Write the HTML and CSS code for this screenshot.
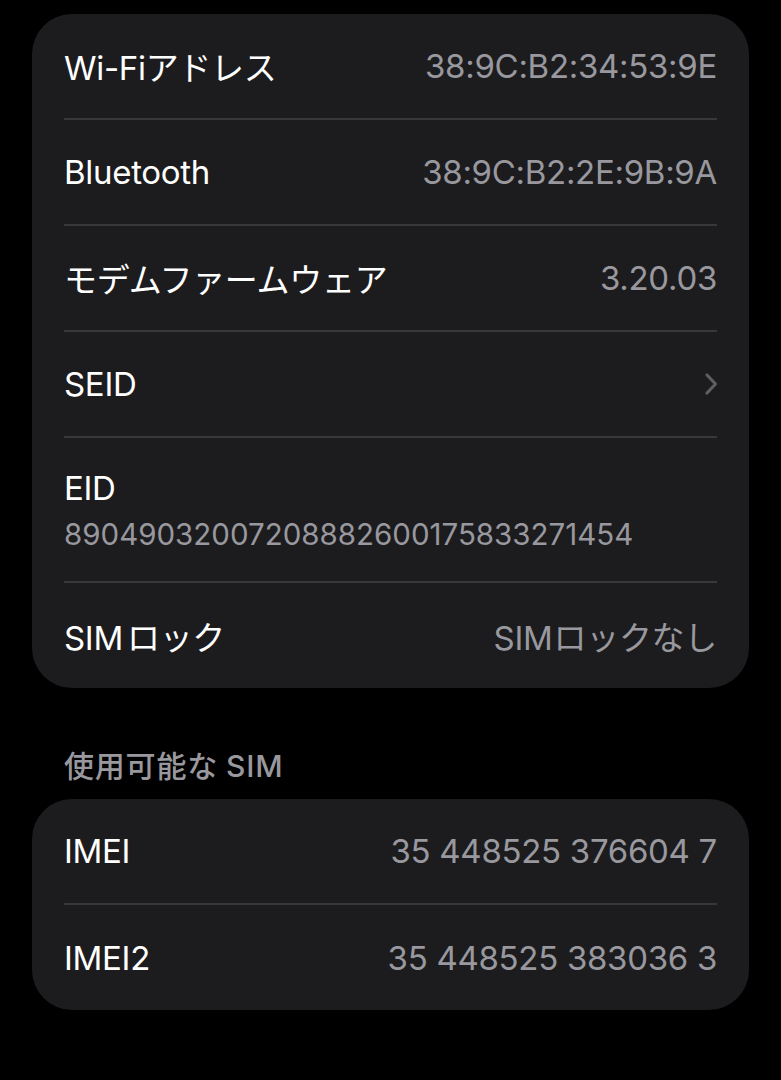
FILE: index.html
```html
<!DOCTYPE html>
<html lang="ja">
<head>
    <meta charset="UTF-8">
    <meta name="viewport" content="width=device-width, initial-scale=1.0">
    <title>情報</title>
    <link rel="stylesheet" href="styles.css">
</head>
<body>
    <div class="page">
        <div class="group">
            <div class="row">
                <span class="label">Wi-Fiアドレス</span>
                <span class="value">38:9C:B2:34:53:9E</span>
            </div>
            <div class="row">
                <span class="label">Bluetooth</span>
                <span class="value">38:9C:B2:2E:9B:9A</span>
            </div>
            <div class="row">
                <span class="label">モデムファームウェア</span>
                <span class="value">3.20.03</span>
            </div>
            <div class="row">
                <span class="label">SEID</span>
                <svg class="chevron" width="16" height="26" viewBox="0 0 16 26">
                    <polyline points="4,4 12.5,13 4,22" fill="none" stroke="#5e5e62" stroke-width="3.2" stroke-linecap="round" stroke-linejoin="round"/>
                </svg>
            </div>
            <div class="row stacked">
                <span class="label">EID</span>
                <span class="sub">89049032007208882600175833271454</span>
            </div>
            <div class="row">
                <span class="label">SIM<span class="gap">ロック</span></span>
                <span class="value">SIM<span class="gap">ロックなし</span></span>
            </div>
        </div>

        <div class="section-title">使用可能な<span class="gap">SIM</span></div>

        <div class="group">
            <div class="row">
                <span class="label">IMEI</span>
                <span class="value">35 448525 376604 7</span>
            </div>
            <div class="row">
                <span class="label">IMEI2</span>
                <span class="value">35 448525 383036 3</span>
            </div>
        </div>
    </div>
</body>
</html>
```

FILE: styles.css
```css
:root {
    --bg: #000000;
    --card: #1c1c1e;
    --sep: #38383a;
    --text: #ffffff;
    --muted: #98989e;
}

body {
    margin: 0;
    background-color: var(--bg);
    color: var(--text);
    font-family: Inter, "Noto Sans CJK JP", sans-serif;
}

.page {
    padding: 14px 32px 0;
}

.group {
    background-color: var(--card);
    border-radius: 40px;
    overflow: hidden;
}

.row {
    margin: 0 32px;
    min-height: 104px;
    display: flex;
    align-items: center;
    justify-content: space-between;
    border-bottom: 2px solid var(--sep);
    font-size: 33px;
    letter-spacing: -0.3px;
}

.row:last-child {
    border-bottom: none;
    min-height: 105px;
}

.row.stacked {
    flex-direction: column;
    align-items: flex-start;
    justify-content: center;
    min-height: 143px;
    gap: 8px;
}

.label {
    color: var(--text);
}

.value {
    color: var(--muted);
}

/* latin and kana sit a little apart */
.gap {
    margin-left: 4px;
}

.value .gap {
    margin-left: 1px;
}

.sub {
    color: var(--muted);
    font-size: 29.5px;
    letter-spacing: 0;
}

.chevron {
    display: block;
    margin-right: -2px;
}

.section-title {
    margin: 58px 32px 13px;
    line-height: 40px;
    font-size: 30px;
    font-weight: 500;
    letter-spacing: 0.8px;
    color: var(--muted);
}

.section-title .gap {
    margin-left: 8px;
}
```
